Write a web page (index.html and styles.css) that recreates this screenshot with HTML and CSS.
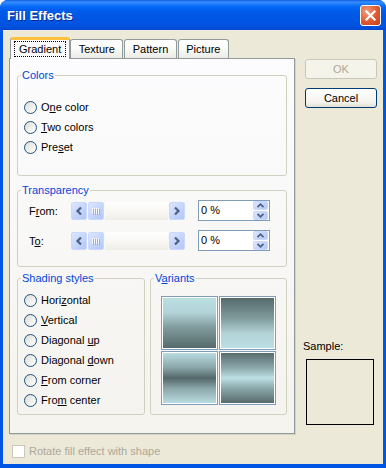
FILE: index.html
```html
<!DOCTYPE html>
<html>
<head>
<meta charset="utf-8">
<link rel="stylesheet" href="styles.css">
</head>
<body>
<div class="window">
  <div class="titlebar">
    <span class="title">Fill Effects</span>
    <span class="close"><svg width="19" height="19" viewBox="0 0 19 19"><path d="M5.5 5.5 L13.5 13.5 M13.5 5.5 L5.5 13.5" stroke="#fff" stroke-width="2.2" stroke-linecap="square"/></svg></span>
  </div>
  <div class="client">
    <div class="main">
      <div class="tabcol">
        <div class="tabstrip">
          <div class="tab tab-active"><span class="focus">Gradient</span></div>
          <div class="tab tab-next">Texture</div>
          <div class="tab">Pattern</div>
          <div class="tab">Picture</div>
        </div>
        <div class="panel">
          <fieldset class="group g-colors">
            <legend>Colors</legend>
            <div class="radios">
              <div class="radio"><span class="rb"></span><span>O<u>n</u>e color</span></div>
              <div class="radio"><span class="rb"></span><span><u>T</u>wo colors</span></div>
              <div class="radio"><span class="rb"></span><span>Pre<u>s</u>et</span></div>
            </div>
          </fieldset>
          <fieldset class="group g-transp">
            <legend>Transparency</legend>
            <div class="trows">
              <div class="trow">
                <span class="tlabel">F<u>r</u>om:</span>
                <div class="hscroll">
                  <span class="sbtn"><svg width="14" height="16" viewBox="0 0 14 16"><polyline points="9,4.5 5.5,8 9,11.5" fill="none" stroke="#4D6185" stroke-width="2.2"/></svg></span>
                  <span class="sbtn thumb"><svg width="14" height="16" viewBox="0 0 14 16"><g fill="#F4F8FE"><rect x="3" y="5" width="1" height="6"/><rect x="5" y="5" width="1" height="6"/><rect x="7" y="5" width="1" height="6"/><rect x="9" y="5" width="1" height="6"/></g><g fill="#8DAFF3"><rect x="4" y="6" width="1" height="6"/><rect x="6" y="6" width="1" height="6"/><rect x="8" y="6" width="1" height="6"/><rect x="10" y="6" width="1" height="6"/></g></svg></span>
                  <span class="track"></span>
                  <span class="sbtn"><svg width="14" height="16" viewBox="0 0 14 16"><polyline points="5,4.5 8.5,8 5,11.5" fill="none" stroke="#4D6185" stroke-width="2.2"/></svg></span>
                </div>
                <div class="spin">
                  <span class="spin-val">0 %</span>
                  <span class="spin-btns">
                    <span class="sp"><svg width="13" height="7" viewBox="0 0 13 7"><polyline points="3.5,5.2 6.5,2.2 9.5,5.2" fill="none" stroke="#4D6185" stroke-width="1.8"/></svg></span>
                    <span class="sp"><svg width="13" height="7" viewBox="0 0 13 7"><polyline points="3.5,1.8 6.5,4.8 9.5,1.8" fill="none" stroke="#4D6185" stroke-width="1.8"/></svg></span>
                  </span>
                </div>
              </div>
              <div class="trow">
                <span class="tlabel">T<u>o</u>:</span>
                <div class="hscroll">
                  <span class="sbtn"><svg width="14" height="16" viewBox="0 0 14 16"><polyline points="9,4.5 5.5,8 9,11.5" fill="none" stroke="#4D6185" stroke-width="2.2"/></svg></span>
                  <span class="sbtn thumb"><svg width="14" height="16" viewBox="0 0 14 16"><g fill="#F4F8FE"><rect x="3" y="5" width="1" height="6"/><rect x="5" y="5" width="1" height="6"/><rect x="7" y="5" width="1" height="6"/><rect x="9" y="5" width="1" height="6"/></g><g fill="#8DAFF3"><rect x="4" y="6" width="1" height="6"/><rect x="6" y="6" width="1" height="6"/><rect x="8" y="6" width="1" height="6"/><rect x="10" y="6" width="1" height="6"/></g></svg></span>
                  <span class="track"></span>
                  <span class="sbtn"><svg width="14" height="16" viewBox="0 0 14 16"><polyline points="5,4.5 8.5,8 5,11.5" fill="none" stroke="#4D6185" stroke-width="2.2"/></svg></span>
                </div>
                <div class="spin">
                  <span class="spin-val">0 %</span>
                  <span class="spin-btns">
                    <span class="sp"><svg width="13" height="7" viewBox="0 0 13 7"><polyline points="3.5,5.2 6.5,2.2 9.5,5.2" fill="none" stroke="#4D6185" stroke-width="1.8"/></svg></span>
                    <span class="sp"><svg width="13" height="7" viewBox="0 0 13 7"><polyline points="3.5,1.8 6.5,4.8 9.5,1.8" fill="none" stroke="#4D6185" stroke-width="1.8"/></svg></span>
                  </span>
                </div>
              </div>
            </div>
          </fieldset>
          <div class="bgroups">
            <fieldset class="group g-shading">
              <legend>Shading styles</legend>
              <div class="radios">
                <div class="radio"><span class="rb"></span><span>Hori<u>z</u>ontal</span></div>
                <div class="radio"><span class="rb"></span><span><u>V</u>ertical</span></div>
                <div class="radio"><span class="rb"></span><span>Diagonal <u>u</u>p</span></div>
                <div class="radio"><span class="rb"></span><span>Diagonal <u>d</u>own</span></div>
                <div class="radio"><span class="rb"></span><span><u>F</u>rom corner</span></div>
                <div class="radio"><span class="rb"></span><span>Fro<u>m</u> center</span></div>
              </div>
            </fieldset>
            <fieldset class="group g-variants">
              <legend>V<u>a</u>riants</legend>
              <div class="swatches">
                <span class="sw sw1"></span>
                <span class="sw sw2"></span>
                <span class="sw sw3"></span>
                <span class="sw sw4"></span>
              </div>
            </fieldset>
          </div>
        </div>
      </div>
      <div class="side">
        <button class="btn btn-disabled">OK</button>
        <button class="btn btn-cancel">Cancel</button>
        <div class="sample-label">Sample:</div>
        <div class="sample-box"></div>
      </div>
    </div>
    <div class="rotate"><span class="cb"></span><span>Rotate fill effect with shape</span></div>
  </div>
</div>
</body>
</html>
```
FILE: styles.css
```css
* { box-sizing: border-box; }
body {
  margin: 0;
  background: #ffffff;
  font-family: "Liberation Sans", Arial, sans-serif;
  font-size: 11px;
  color: #000;
}
u { text-decoration: underline; text-underline-offset: 1px; }

.window {
  width: 386px;
  height: 468px;
  background: #0055E5;
  border-radius: 8px 8px 0 0;
  display: flex;
  flex-direction: column;
  overflow: hidden;
}
.titlebar {
  height: 30px;
  flex: none;
  display: flex;
  align-items: center;
  justify-content: space-between;
  padding: 0 5px 0 7px;
  background: linear-gradient(#0A5DDE 0px, #3A8CFB 2px, #2B86FF 3px, #0B6CF8 6px, #0060EF 9px, #0058E6 14px, #0055E3 22px, #0051DD 27px, #0048CF 30px);
}
.title {
  color: #fff;
  font-weight: bold;
  font-size: 13px;
  text-shadow: 1px 1px 0 #0F2A8C;
}
.close {
  width: 21px;
  height: 21px;
  border: 1px solid #fff;
  border-radius: 3px;
  background: radial-gradient(circle at 30% 28%, #F19C7F 0%, #E0582F 55%, #C2401F 100%);
  display: flex;
  align-items: center;
  justify-content: center;
}

.client {
  flex: 1;
  margin: 0 3px 4px;
  background: #ECE9D8;
  display: flex;
  flex-direction: column;
  padding: 7px 0 0 6px;
}
.main { display: flex; }
.tabcol { width: 286px; flex: none; }

.tabstrip {
  display: flex;
  align-items: flex-end;
  height: 21px;
  padding-left: 1px;
}
.tab {
  height: 19px;
  border: 1px solid #919B9C;
  border-bottom: none;
  border-radius: 3px 3px 0 0;
  padding: 0 7.5px;
  line-height: 18px;
  background: linear-gradient(#FFFFFF, #FBFBF9 40%, #ECEBE6);
  margin-left: 1px;
}
.tab-next { margin-left: 0; }
.tab-active {
  height: 22px;
  margin-left: 0;
  margin-bottom: -1px;
  position: relative;
  z-index: 1;
  border-top: 3px solid #FFC13C;
  border-radius: 3px 3px 0 0;
  background: #FCFCFE;
  padding: 1px 3px 0;
  line-height: 14px;
}
.focus {
  display: block;
  border: 1px dotted #000;
  padding: 0 4px;
}

.panel {
  height: 376px;
  border: 1px solid #919B9C;
  background: linear-gradient(#FCFCFE, #F4F3EE);
  padding: 10px 7px 0;
  box-shadow: 1px 1px 0 #D6D2C2;
}

.group {
  margin: 0;
  padding: 0;
  border: 1px solid #D0D0BF;
  border-radius: 3px;
  min-width: 0;
}
.group legend {
  margin-left: 3px;
  padding: 0 1px;
  color: #0046D5;
  line-height: 13px;
}

.radios { padding-left: 6px; }
.g-colors .radios { padding-top: 15px; padding-bottom: 18px; }
.radio {
  display: flex;
  align-items: center;
  gap: 4px;
  height: 20px;
}
.rb {
  width: 13px;
  height: 13px;
  flex: none;
  border: 1px solid #1C5180;
  border-radius: 50%;
  background: linear-gradient(135deg, #DCDCD7 0%, #F2F2EF 60%, #FFFFFF 100%);
}

.g-transp { margin-top: 8px; }
.trows {
  padding: 3px 0 15px 11px;
  display: flex;
  flex-direction: column;
  gap: 9px;
}
.trow {
  display: flex;
  align-items: center;
  height: 21px;
}
.tlabel { width: 42px; flex: none; }
.hscroll {
  display: flex;
  width: 114px;
  height: 18px;
  gap: 1px;
  flex: none;
}
.sbtn {
  width: 16px;
  height: 18px;
  flex: none;
  border: 1px solid #C9D8FB;
  border-radius: 2px;
  background: linear-gradient(135deg, #DDE7FE 0%, #C6D6FB 50%, #B3C8F5 100%);
  display: flex;
  align-items: center;
  justify-content: center;
}
.track {
  flex: 1;
  background: linear-gradient(#FEFEFD, #F7F6F2 60%, #EEEDE6);
}
.spin {
  width: 72px;
  height: 21px;
  margin-left: 13px;
  border: 1px solid #7F9DB9;
  background: #fff;
  display: flex;
  flex: none;
}
.spin-val {
  flex: 1;
  padding-left: 2px;
  line-height: 19px;
}
.spin-btns {
  width: 15px;
  display: flex;
  flex-direction: column;
  gap: 1px;
  margin: 0 1px 1px 0;
}
.sp {
  flex: 1;
  border: 1px solid #C9D8FB;
  border-radius: 2px;
  background: linear-gradient(135deg, #DDE7FE 0%, #C6D6FB 50%, #B3C8F5 100%);
  display: flex;
  align-items: center;
  justify-content: center;
}

.bgroups {
  display: flex;
  gap: 5px;
  margin-top: 5px;
}
.g-shading { width: 128px; flex: none; }
.g-shading .radios { padding-top: 5px; padding-bottom: 4px; }
.g-variants { flex: 1; }
.swatches {
  display: grid;
  grid-template-columns: 57px 57px;
  grid-template-rows: 54px 54px;
  gap: 1px;
  margin: 11px 0 0 10px;
}
.sw {
  border: 1px solid #7F9DB9;
  box-shadow: inset 0 0 0 1px #fff;
}
.sw1 { background: linear-gradient(#BCE0E4 0%, #B2D3D7 30%, #7F999B 60%, #546869 100%); }
.sw2 { background: linear-gradient(#546869 0%, #7F999B 40%, #B2D3D7 70%, #BCE0E4 100%); }
.sw3 { background: linear-gradient(#BCE0E4 0%, #8AA6A9 30%, #546869 50%, #8AA6A9 70%, #BCE0E4 100%); }
.sw4 { background: linear-gradient(#546869 0%, #8AA6A9 30%, #BCE0E4 50%, #8AA6A9 70%, #546869 100%); }

.side {
  margin-left: 10px;
  width: 72px;
  flex: none;
  display: flex;
  flex-direction: column;
  padding: 22px 0 9px;
}
.btn {
  width: 72px;
  height: 20px;
  padding: 0;
  font: inherit;
  border-radius: 3px;
}
.btn-disabled {
  border: 1px solid #C9C7BA;
  background: #F5F4EA;
  color: #ACA899;
}
.btn-cancel {
  margin-top: 9px;
  border: 1px solid #003C74;
  background: linear-gradient(#FFFFFF, #F4F4F0 70%, #E3E0D6);
  color: #000;
}
.sample-label {
  margin-top: auto;
  margin-left: -2px;
  margin-bottom: 6px;
  line-height: 13px;
}
.sample-box {
  width: 68px;
  height: 66px;
  margin-left: 1px;
  border: 1px solid #000;
}

.rotate {
  display: flex;
  align-items: center;
  gap: 4px;
  margin-top: 11px;
  padding-left: 3px;
  color: #ACA899;
  line-height: 13px;
}
.cb {
  width: 13px;
  height: 13px;
  flex: none;
  border: 1px solid #CAC8BB;
  background: #fff;
}
```
